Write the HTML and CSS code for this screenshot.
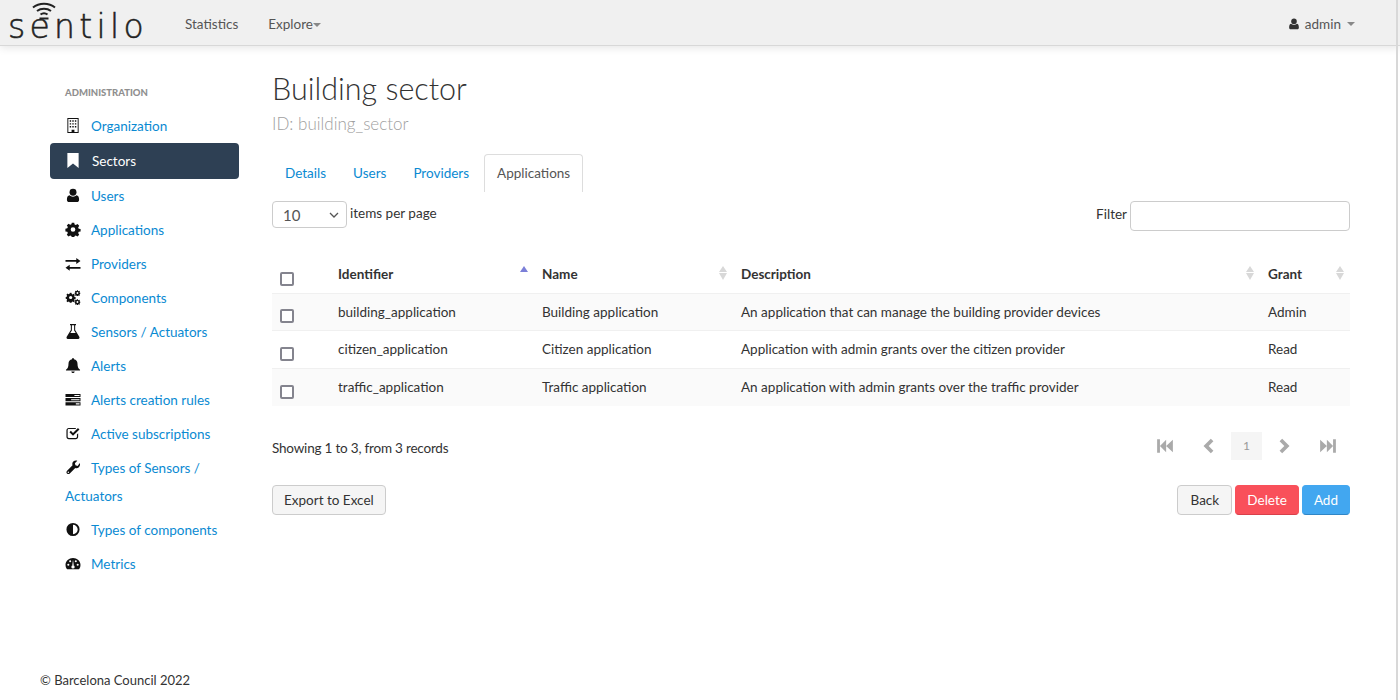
FILE: index.html
```html
<!DOCTYPE html>
<html lang="en">
  <head>
    <meta charset="UTF-8">
    <meta name="viewport" content="width=device-width, initial-scale=1.0">
    <title>Building sector</title>
    <link rel="stylesheet" href="styles.css">
  </head>
  <body>
    <svg class="icon-defs" xmlns="http://www.w3.org/2000/svg">
      <symbol id="i-building" viewBox="0 0 16 16"><path fill-rule="evenodd" d="M2 0h12v16H2zM3 1v14h3.500v-2.500h3V15H13V1z"/><path d="M4.500 2.500h1.500V4H4.500zM7.250 2.500h1.500V4h-1.500zM10 2.500h1.500V4H10zM4.500 5.500h1.500V7H4.500zM7.250 5.500h1.500V7h-1.500zM10 5.500h1.500V7H10zM4.500 8.500h1.500V10H4.500zM7.250 8.500h1.500V10h-1.500zM10 8.500h1.500V10H10z"/></symbol>
      <symbol id="i-bookmark" viewBox="0 0 16 16"><path d="M2 0h12v16L8 11.300 2 16z"/></symbol>
      <symbol id="i-user" viewBox="0 0 16 16"><circle cx="8" cy="4.500" r="3.700"/><path d="M4.300 7.800C5.200 8.700 6.500 9.300 8 9.300s2.800-.6 3.700-1.500c1.900.2 2.800 2 2.800 4.700 0 1.700-1 2.500-2.300 2.500H3.800c-1.300 0-2.300-.8-2.300-2.500 0-2.700.9-4.500 2.800-4.700z"/></symbol>
      <symbol id="i-exchange" viewBox="0 0 16 16"><path d="M0 4.300h11.500V2l4.500 3.200-4.500 3.200V6.100H0zM16 9.900v1.800H4.500V9.400L0 12.600l4.500 3.200v-2.300H16z"/></symbol>
      <symbol id="i-cog" viewBox="0 0 16 16"><path fill-rule="evenodd" d="M6.700 1h2.600l.4 2 1.300.6 1.800-1.100 1.800 1.800-1.100 1.800.6 1.300 2 .4v2.600l-2 .4-.6 1.300 1.100 1.800-1.800 1.800-1.800-1.100-1.300.6-.4 2H6.700l-.4-2-1.300-.6-1.800 1.100-1.800-1.800 1.100-1.800-.6-1.300-2-.4V7.400l2-.4.6-1.300-1.100-1.800 1.800-1.800 1.800 1.100 1.300-.6zM8 5.800a2.500 2.500 0 1 0 0 5 2.500 2.500 0 0 0 0-5z" transform="translate(0 -.3)"/></symbol>
      <symbol id="i-cogs" viewBox="0 0 16 16"><use href="#i-cog" x="0" y="2.500" width="11" height="11"/><use href="#i-cog" x="9.500" y="0" width="6.500" height="6.500"/><use href="#i-cog" x="9.500" y="9.500" width="6.500" height="6.500"/></symbol>
      <symbol id="i-flask" viewBox="0 0 16 16"><path fill-rule="evenodd" d="M4.800 0h6.400v1.300h-.9v5.200l4.400 7.200c.6 1 0 2.300-1.100 2.300H2.400c-1.100 0-1.700-1.300-1.100-2.300l4.400-7.200V1.300h-.9zM6.800 1.300v5.500L5.100 9.600h5.800L9.200 6.800V1.300z"/></symbol>
      <symbol id="i-bell" viewBox="0 0 16 16"><path d="M8 0c.6 0 1 .4 1 1v.4c2.400.4 3.800 2.300 3.800 4.600 0 3.200.8 5 2.700 6.500v.8H.5v-.8c1.900-1.500 2.700-3.300 2.700-6.500 0-2.300 1.400-4.200 3.800-4.600V1c0-.6.4-1 1-1zM6.200 14.400h3.600c0 1-.8 1.600-1.800 1.600s-1.800-.6-1.800-1.600z"/></symbol>
      <symbol id="i-tasks" viewBox="0 0 16 16"><path fill-rule="evenodd" d="M0 2h16v3.300H0zM9.500 3.100v1.100H15V3.100zM0 6.500h16v3.300H0zM6 7.600v1.100h9V7.600zM0 11h16v3.300H0zM11 12.100v1.100h4v-1.100z"/></symbol>
      <symbol id="i-check" viewBox="0 0 16 16"><path d="M3.500 2H11v1.300H3.500c-.7 0-1.200.5-1.200 1.200v7c0 .7.5 1.200 1.200 1.200h7.500c.7 0 1.200-.5 1.200-1.200V9l1.300-1.300v3.800c0 1.500-1 2.500-2.500 2.500H3.500C2 14 1 13 1 11.500v-7C1 3 2 2 3.500 2z"/><path d="M4.200 6.600l1.500-1.500 2.300 2.300 5.300-5.300 1.600 1.500L8 10.500z"/></symbol>
      <symbol id="i-wrench" viewBox="0 0 16 16"><path fill-rule="evenodd" d="M15.300 3.300c.5 1.700.1 3.300-1 4.400-1.100 1-2.500 1.300-3.900.8L4.600 14.300c-.9.9-2.100.9-3 .1-.8-.9-.8-2.100.1-3L7.500 5.600c-.5-1.400-.2-2.800.8-3.900 1-1.100 2.600-1.500 4.300-1L10 3.400l.6 2.300 2.300.6zM3 12.300a.8.8 0 1 0 0 1.600.8.8 0 0 0 0-1.600z"/></symbol>
      <symbol id="i-adjust" viewBox="0 0 16 16"><path fill-rule="evenodd" d="M8 1a7 7 0 1 1 0 14A7 7 0 0 1 8 1zm0 2v10a5 5 0 0 0 0-10z"/></symbol>
      <symbol id="i-gauge" viewBox="0 0 16 16"><path fill-rule="evenodd" d="M8 2c4.400 0 8 3.200 8 7.500 0 1.500-.4 3-1.200 4.200-.2.2-.4.3-.7.3H1.900c-.3 0-.5-.1-.7-.3C.4 12.500 0 11 0 9.500 0 5.200 3.600 2 8 2zM3 8.200a1.100 1.100 0 1 0 0 2.200 1.100 1.100 0 0 0 0-2.200zM5 4.500a1.100 1.100 0 1 0 0 2.200 1.100 1.100 0 0 0 0-2.200zM11 4.500a1.100 1.100 0 1 0 0 2.200 1.100 1.100 0 0 0 0-2.200zM13 8.200a1.100 1.100 0 1 0 0 2.200 1.100 1.100 0 0 0 0-2.200zM8 9.800a1.800 1.800 0 1 0 0 3.600 1.800 1.800 0 0 0 0-3.600zM8 4l-.8 6h1.600z"/></symbol>
      <symbol id="i-first" viewBox="0 0 16 16"><path d="M1 2h2.500v12H1zM3.500 8L9 2.500v11zM9 8l6-5.500v11z"/></symbol>
      <symbol id="i-last" viewBox="0 0 16 16"><path d="M15 2h-2.500v12H15zM12.500 8L7 2.500v11zM7 8L1 2.500v11z"/></symbol>
      <symbol id="i-prev" viewBox="0 0 16 16"><path d="M10.500 1.500l2.300 2.300L8.600 8l4.200 4.200-2.300 2.300L4 8z"/></symbol>
      <symbol id="i-next" viewBox="0 0 16 16"><path d="M5.500 1.500L3.200 3.800 7.400 8l-4.200 4.200 2.300 2.300L12 8z"/></symbol>
    </svg>

    <div class="scroll-line"></div>

    <nav class="navbar">
      <a class="brand" href="#">
        <svg class="brand-wifi" viewBox="0 0 36 20" xmlns="http://www.w3.org/2000/svg">
          <path d="M7 6.500C13 1.500 23 1.500 29 6.500M11 10C15 7 21 7 25 10M14.500 13.500C16.500 12 19.500 12 21.500 13.500M13.500 17.500H22.500"/>
        </svg>
        <span class="brand-name">sentilo</span>
      </a>
      <a class="nav-link" href="#">Statistics</a>
      <a class="nav-link" href="#">Explore<span class="caret caret-tight"></span></a>
      <a class="nav-link nav-user" href="#"><svg class="icon-user"><use href="#i-user"/></svg>admin<span class="caret"></span></a>
    </nav>

    <div class="page">
      <aside class="sidebar">
        <div class="side-title">ADMINISTRATION</div>
        <ul class="side-menu">
          <li><a href="#"><svg class="side-icon"><use href="#i-building"/></svg>Organization</a></li>
          <li class="active"><a href="#"><svg class="side-icon"><use href="#i-bookmark"/></svg>Sectors</a></li>
          <li><a href="#"><svg class="side-icon"><use href="#i-user"/></svg>Users</a></li>
          <li><a href="#"><svg class="side-icon"><use href="#i-cog"/></svg>Applications</a></li>
          <li><a href="#"><svg class="side-icon"><use href="#i-exchange"/></svg>Providers</a></li>
          <li><a href="#"><svg class="side-icon"><use href="#i-cogs"/></svg>Components</a></li>
          <li><a href="#"><svg class="side-icon"><use href="#i-flask"/></svg>Sensors / Actuators</a></li>
          <li><a href="#"><svg class="side-icon"><use href="#i-bell"/></svg>Alerts</a></li>
          <li><a href="#"><svg class="side-icon"><use href="#i-tasks"/></svg>Alerts creation rules</a></li>
          <li><a href="#"><svg class="side-icon"><use href="#i-check"/></svg>Active subscriptions</a></li>
          <li><a href="#"><svg class="side-icon"><use href="#i-wrench"/></svg>Types of Sensors / Actuators</a></li>
          <li><a href="#"><svg class="side-icon"><use href="#i-adjust"/></svg>Types of components</a></li>
          <li><a href="#"><svg class="side-icon"><use href="#i-gauge"/></svg>Metrics</a></li>
        </ul>
      </aside>

      <main class="content">
        <h1>Building sector</h1>
        <div class="subtitle">ID: building_sector</div>

        <ul class="tabs">
          <li><a href="#">Details</a></li>
          <li><a href="#">Users</a></li>
          <li><a href="#">Providers</a></li>
          <li class="active"><a href="#">Applications</a></li>
        </ul>

        <div class="table-tools">
          <label class="per-page">
            <select><option>10</option></select>
            items per page
          </label>
          <label class="filter">Filter <input type="text"></label>
        </div>

        <table class="grid">
          <colgroup>
            <col class="col-check">
            <col class="col-id">
            <col class="col-name">
            <col class="col-desc">
            <col class="col-grant">
          </colgroup>
          <thead>
            <tr>
              <th><input type="checkbox"></th>
              <th class="sort sort-asc">Identifier</th>
              <th class="sort">Name</th>
              <th class="sort">Description</th>
              <th class="sort">Grant</th>
            </tr>
          </thead>
          <tbody>
            <tr>
              <td><input type="checkbox"></td>
              <td>building_application</td>
              <td>Building application</td>
              <td>An application that can manage the building provider devices</td>
              <td>Admin</td>
            </tr>
            <tr>
              <td><input type="checkbox"></td>
              <td>citizen_application</td>
              <td>Citizen application</td>
              <td>Application with admin grants over the citizen provider</td>
              <td>Read</td>
            </tr>
            <tr>
              <td><input type="checkbox"></td>
              <td>traffic_application</td>
              <td>Traffic application</td>
              <td>An application with admin grants over the traffic provider</td>
              <td>Read</td>
            </tr>
          </tbody>
        </table>

        <div class="table-info">
          <div class="records">Showing 1 to 3, from 3 records</div>
          <div class="pager">
            <svg class="pager-icon pager-first"><use href="#i-first"/></svg>
            <svg class="pager-icon"><use href="#i-prev"/></svg>
            <span class="pager-current">1</span>
            <svg class="pager-icon"><use href="#i-next"/></svg>
            <svg class="pager-icon pager-last"><use href="#i-last"/></svg>
          </div>
        </div>

        <div class="actions">
          <button class="btn">Export to Excel</button>
          <div class="actions-right">
            <button class="btn btn-back">Back</button>
            <button class="btn btn-danger">Delete</button>
            <button class="btn btn-primary">Add</button>
          </div>
        </div>
      </main>
    </div>

    <footer class="footer">© Barcelona Council 2022</footer>
  </body>
</html>
```

FILE: styles.css
```css
* {
  box-sizing: border-box;
}

html, body {
  height: 100%;
}

body {
  margin: 0;
  display: flex;
  flex-direction: column;
  height: 700px;
  overflow: hidden;
  font-family: Lato, "Noto Sans", sans-serif;
  font-size: 13.5px;
  line-height: 20px;
  color: #333;
  background-color: #fff;
}

a {
  color: #0a8ad2;
  text-decoration: none;
}

.icon-defs {
  display: none;
}

.scroll-line {
  position: fixed;
  top: 0;
  right: 2px;
  bottom: 0;
  width: 2px;
  background-color: #d8d8d8;
}

/* navbar */
.navbar {
  display: flex;
  align-items: center;
  height: 46px;
  flex-shrink: 0;
  padding: 2px 45px 0 0;
  background-color: #f0f0f0;
  border-bottom: 1px solid #d8d8d8;
  box-shadow: 0 2px 8px rgba(0, 0, 0, 0.1);
}

.brand {
  position: relative;
  display: block;
  width: 185px;
  height: 45px;
  margin-top: -2px;
  padding-left: 8px;
  color: #222;
}

.brand-wifi {
  position: absolute;
  left: 26px;
  top: 1px;
  width: 36px;
  height: 20px;
  fill: none;
  stroke: #222;
  stroke-width: 2;
}

.brand-name {
  display: block;
  font-family: "DejaVu Sans", sans-serif;
  font-weight: 200;
  font-size: 33px;
  line-height: 54px;
  letter-spacing: 4.300px;
  -webkit-text-stroke: 0.5px #222;
}

.nav-link {
  margin-right: 30px;
  color: #555;
}

.nav-user {
  display: flex;
  align-items: center;
  margin-left: auto;
  margin-right: 0;
}

.icon-user {
  width: 12px;
  height: 12px;
  margin-right: 5px;
  fill: #333;
}

.caret {
  display: inline-block;
  margin-left: 6px;
  border-top: 4px solid #888;
  border-left: 4px solid transparent;
  border-right: 4px solid transparent;
  vertical-align: middle;
}

.caret-tight {
  margin-left: 0;
}

/* layout */
.page {
  display: flex;
  flex: 1;
  padding: 0 50px;
}

.sidebar {
  width: 189px;
  flex-shrink: 0;
  margin-right: 33px;
  padding-top: 37px;
}

.side-title {
  padding-left: 15px;
  height: 26px;
  font-size: 9.5px;
  font-weight: 900;
  color: #8f8f8f;
}

.side-menu {
  margin: 0;
  padding: 0;
  list-style: none;
}

.side-menu a {
  display: block;
  padding: 3px 15px;
  line-height: 28px;
}

.side-icon {
  display: inline-block;
  width: 16px;
  height: 15px;
  margin-right: 10px;
  fill: #111;
  vertical-align: -2px;
}

.side-menu .active a {
  padding-top: 4px;
  padding-bottom: 4px;
  color: #fff;
  background-color: #2e4054;
  border-radius: 4px;
}

.side-menu .active .side-icon {
  fill: #fff;
  margin-right: 11px;
}

.content {
  flex: 1;
  min-width: 0;
  padding-top: 20px;
}

h1 {
  margin: 0;
  font-size: 30.5px;
  font-weight: 300;
  line-height: 44px;
  color: #333;
}

.subtitle {
  margin-top: 2px;
  font-size: 17px;
  font-weight: 300;
  line-height: 24px;
  color: #a0a0a0;
}

/* tabs */
.tabs {
  display: flex;
  margin: 18px 0 0;
  padding: 0;
  list-style: none;
}

.tabs a {
  display: block;
  height: 38px;
  padding: 8px 12px;
  margin-right: 1px;
  border: 1px solid transparent;
  border-bottom: 0;
}

.tabs .active {
  margin-left: 1px;
}

.tabs .active a {
  color: #555;
  border-color: #ddd;
  border-radius: 4px 4px 0 0;
}

/* table tools */
.table-tools {
  display: flex;
  justify-content: space-between;
  align-items: flex-start;
  margin-top: 9px;
}

.per-page {
  display: flex;
  align-items: flex-start;
  gap: 3px;
  line-height: 24px;
}

.per-page select {
  appearance: none;
  width: 75px;
  height: 27px;
  padding: 0 10px;
  font-family: inherit;
  font-size: 15px;
  color: #555;
  background-color: #fff;
  background-image: url("data:image/svg+xml,%3Csvg xmlns='http://www.w3.org/2000/svg' width='10' height='6'%3E%3Cpath d='M1 1l4 4 4-4' fill='none' stroke='%23555' stroke-width='1.300'/%3E%3C/svg%3E");
  background-repeat: no-repeat;
  background-position: right 7px center;
  border: 1px solid #ccc;
  border-radius: 4px;
}

.filter {
  display: flex;
  align-items: flex-start;
  gap: 3px;
  line-height: 26px;
}

.filter input {
  width: 220px;
  height: 30px;
  border: 1px solid #ccc;
  border-radius: 4px;
}

/* table */
.grid {
  width: 100%;
  margin-top: 24px;
  table-layout: fixed;
  border-collapse: collapse;
}

.col-check { width: 54px; }
.col-id { width: 204px; }
.col-name { width: 199px; }
.col-desc { width: 527px; }
.col-grant { width: 94px; }

.grid th,
.grid td {
  padding: 0 12px;
  text-align: left;
}

.grid th {
  position: relative;
  height: 38px;
  font-weight: 700;
}

.grid td {
  height: 37.500px;
  border-top: 1px solid #f0f0f0;
}

.grid tbody tr:nth-child(odd) {
  background-color: #fafafa;
}

.grid input {
  appearance: none;
  display: block;
  width: 14px;
  height: 14px;
  margin: 9px 0 0 -4px;
  background-color: #fff;
  border: 2px solid #84848e;
  border-radius: 2px;
}

.grid th input {
  margin-top: 11px;
}

.sort::before,
.sort::after {
  content: "";
  position: absolute;
  right: 2px;
  border-left: 4px solid transparent;
  border-right: 4px solid transparent;
}

.sort::before {
  top: 11px;
  border-bottom: 6px solid #d8d8d8;
}

.sort::after {
  top: 18px;
  border-top: 7px solid #d8d8d8;
}

.sort:last-child::before,
.sort:last-child::after {
  right: 6px;
}

.sort-asc::before {
  border-bottom-color: #7b7fd8;
}

.sort-asc::after {
  display: none;
}

/* info and pager */
.table-info {
  display: flex;
  justify-content: space-between;
  align-items: center;
  margin-top: 26px;
  height: 30px;
}

.records {
  padding-top: 3px;
  letter-spacing: -0.2px;
}

.pager {
  display: flex;
  align-items: center;
  gap: 14px;
  margin-top: -2px;
  padding-right: 13px;
}

.pager-icon {
  width: 18px;
  height: 18px;
  fill: #aaa;
}

.pager-first {
  margin-right: 11px;
}

.pager-last {
  margin-left: 11px;
}

.pager-current {
  width: 31px;
  height: 28px;
  font-size: 12px;
  line-height: 28px;
  text-align: center;
  color: #999;
  background-color: #f5f5f5;
}

/* buttons */
.actions {
  display: flex;
  justify-content: space-between;
  margin-top: 23px;
}

.actions-right {
  display: flex;
  gap: 3px;
}

.btn {
  height: 30px;
  padding: 0 11px;
  font-family: inherit;
  font-size: 13.5px;
  color: #333;
  background-color: #f5f5f5;
  border: 1px solid #ccc;
  border-radius: 4px;
}

.btn-back {
  min-width: 55px;
}

.btn-danger {
  color: #fff;
  background-color: #f9505a;
  border-color: #f9505a #f9505a #d9404a;
}

.btn-primary {
  color: #fff;
  background-color: #42a7f0;
  border-color: #42a7f0 #42a7f0 #3086c6;
}

.footer {
  flex-shrink: 0;
  height: 30px;
  padding-left: 40px;
  line-height: 20px;
  font-size: 13px;
}
```
